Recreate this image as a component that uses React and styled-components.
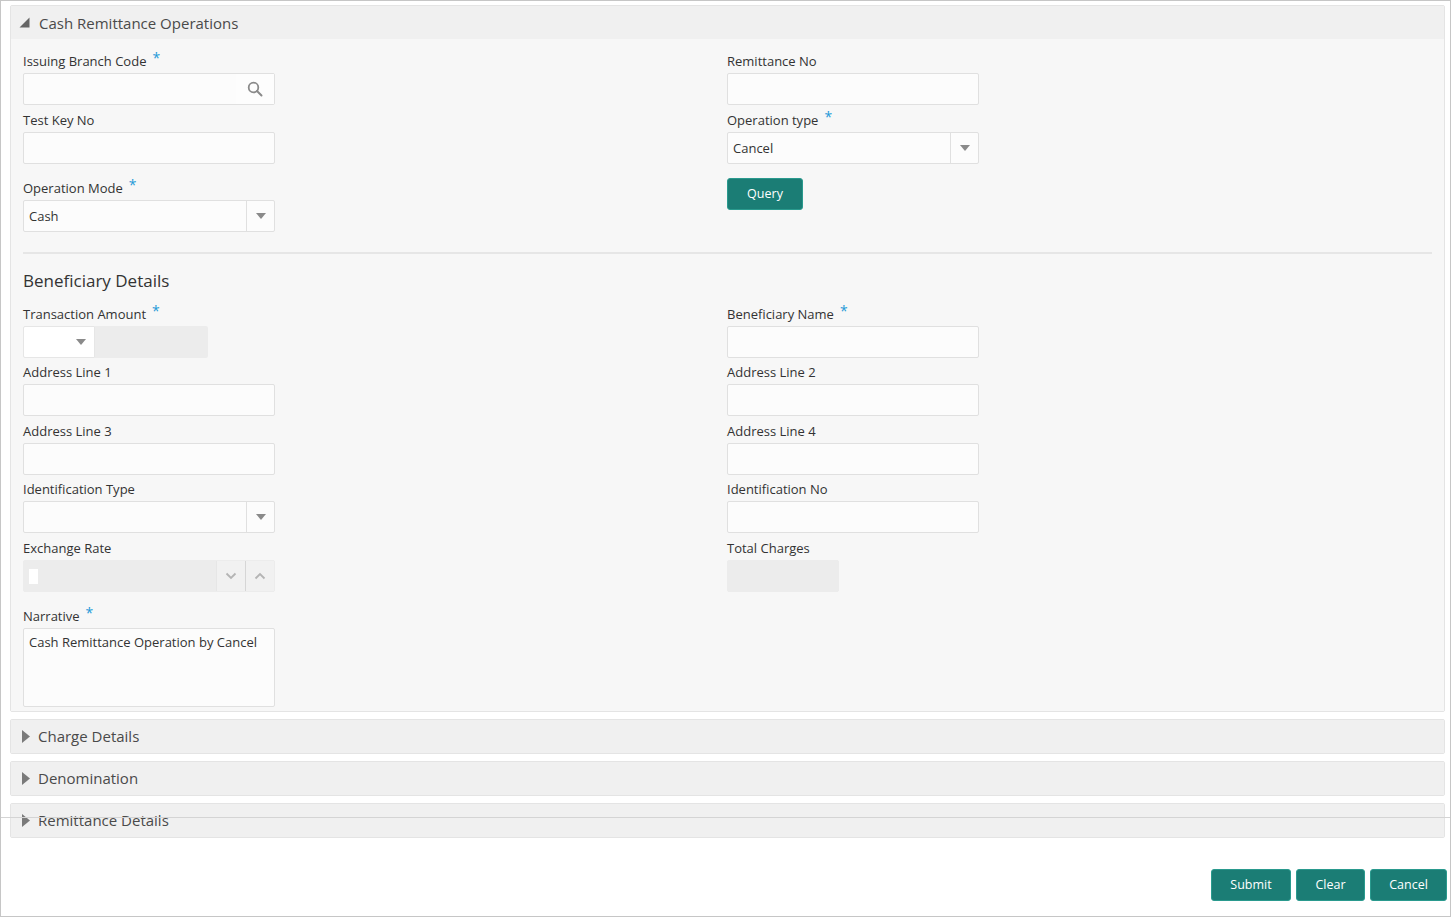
import styled, { createGlobalStyle } from 'styled-components'

const GlobalStyle = createGlobalStyle`
  html, body {
    margin: 0;
    padding: 0;
    background: #ffffff;
  }
  body {
    font-family: "Open Sans", "Noto Sans", "Liberation Sans", sans-serif;
    color: #333333;
  }
`

const Frame = styled.div`
  position: relative;
  box-sizing: border-box;
  width: 1451px;
  height: 917px;
  border: 1px solid #c6c6c6;
  padding: 4px 5px 0 9px;
  display: flex;
  flex-direction: column;
  gap: 7px;
  overflow: hidden;
`

const Panel = styled.section`
  box-sizing: border-box;
  border: 1px solid #e4e4e4;
  border-radius: 2px;
  background: #f0f0f0;
`

const PanelHeader = styled.div`
  display: flex;
  align-items: center;
  gap: ${p => (p.$open ? '9px' : '8px')};
  height: 33px;
  padding-left: ${p => (p.$open ? '8px' : '11px')};
  font-size: 15px;
  color: #4a4a4a;
  background: #f0f0f0;
`

const PanelBody = styled.div`
  background: #f7f7f7;
  padding: 12px 12px 4px 12px;
`

const TwoCols = styled.div`
  display: grid;
  grid-template-columns: 704px 1fr;
  row-gap: 4.5px;
`

const Field = styled.div`
  display: flex;
  flex-direction: column;
  margin-top: ${p => p.$push || 0}px;
`

const Label = styled.label`
  box-sizing: border-box;
  display: flex;
  align-items: flex-start;
  height: 21px;
  padding-top: 1px;
  margin-bottom: 1px;
  font-size: 13px;
  line-height: 18px;
  color: #333333;
`

const Star = styled.span`
  color: #1f9ad8;
  font-size: 14px;
  line-height: 12px;
  margin-left: 6px;
`

const InputBox = styled.div`
  box-sizing: border-box;
  position: relative;
  display: flex;
  align-items: center;
  width: ${p => p.$w || 252}px;
  height: ${p => p.$h || 32}px;
  border: 1px solid ${p => (p.$disabled ? '#ececec' : '#e0e0e0')};
  border-radius: 2px;
  background: ${p => (p.$disabled ? '#ececec' : '#fcfcfc')};
  font-size: 13px;
  color: #333333;
`

const Value = styled.span`
  flex: 1;
  padding-left: 5px;
`

const TextArea = styled.div`
  box-sizing: border-box;
  width: 252px;
  height: 79px;
  border: 1px solid #e0e0e0;
  border-radius: 2px;
  background: #fcfcfc;
  padding: 4px 5px;
  font-size: 13px;
  line-height: 18px;
  color: #333333;
`

const SelectButton = styled.span`
  box-sizing: border-box;
  display: flex;
  align-items: center;
  justify-content: center;
  width: 28px;
  height: 100%;
  border-left: 1px solid ${p => (p.$line ? '#e0e0e0' : 'transparent')};
`

const SearchButton = styled.span`
  display: flex;
  align-items: center;
  justify-content: center;
  width: 38px;
  height: 100%;
  background: #fdfdfd;
`

const Caret = styled.span`
  width: 0;
  height: 0;
  border-left: 5px solid transparent;
  border-right: 5px solid transparent;
  border-top: 6px solid #8a8a8a;
`

const AmountRow = styled.div`
  display: flex;
  height: 32px;
`

const AmountCurrency = styled.div`
  box-sizing: border-box;
  display: flex;
  justify-content: flex-end;
  width: 72px;
  height: 32px;
  border: 1px solid #e6e6e6;
  border-radius: 2px 0 0 2px;
  background: #ffffff;
`

const AmountValue = styled.div`
  width: 113px;
  height: 32px;
  background: #ececec;
  border-radius: 0 2px 2px 0;
`

const SpinButton = styled.span`
  box-sizing: border-box;
  display: flex;
  align-items: center;
  justify-content: center;
  width: 29px;
  height: 100%;
  border-left: 1px solid ${p => (p.$strong ? '#d6d6d6' : '#e6e6e6')};
  background: #f1f1f1;
`

const Cursor = styled.span`
  position: absolute;
  left: 5px;
  top: 8px;
  width: 9px;
  height: 15px;
  background: #ffffff;
`

const QueryButton = styled.button`
  box-sizing: border-box;
  width: 76px;
  height: 32px;
  border: 1px solid #2a9a8e;
  border-radius: 3px;
  background: #1b7d75;
  color: #ffffff;
  font-family: inherit;
  font-size: 12.5px;
  padding: 0;
  margin-top: 9.5px;
`

const Separator = styled.hr`
  border: none;
  border-top: 2px solid #e6e6e6;
  margin: 20px 0 0 0;
`

const SectionTitle = styled.h2`
  margin: 15px 0 11px 0;
  font-size: 17px;
  font-weight: 400;
  line-height: 24px;
  color: #333333;
`

const Footer = styled.div`
  display: flex;
  justify-content: flex-end;
  gap: 5px;
  margin-top: 24px;
  margin-right: -2px;
`

const ActionButton = styled.button`
  box-sizing: border-box;
  width: ${p => p.$w}px;
  height: 32px;
  border: 1px solid #2a9a8e;
  border-radius: 3px;
  background: #1b7d75;
  color: #ffffff;
  font-family: inherit;
  font-size: 12.5px;
  padding: 0;
`

const StrayLine = styled.div`
  position: absolute;
  left: 0;
  right: 0;
  top: 816px;
  height: 1px;
  background: #d4d4d4;
`

function Required() {
  return <Star>*</Star>
}

function SearchIcon() {
  return (
    <svg width="16" height="16" viewBox="0 0 16 16">
      <circle cx="6.5" cy="6.5" r="4.8" fill="none" stroke="#8a8a8a" strokeWidth="1.8" />
      <line x1="10" y1="10" x2="14.5" y2="14.5" stroke="#8a8a8a" strokeWidth="2" strokeLinecap="round" />
    </svg>
  )
}

function Chevron({ up }) {
  return (
    <svg width="12" height="8" viewBox="0 0 12 8">
      <polyline
        points={up ? '1.5,6.5 6,2 10.5,6.5' : '1.5,1.5 6,6 10.5,1.5'}
        fill="none"
        stroke="#b4b4b4"
        strokeWidth="1.8"
      />
    </svg>
  )
}

function OpenArrow() {
  return (
    <svg width="11" height="11" viewBox="0 0 11 11">
      <polygon points="10.5,0.5 10.5,10.5 0.5,10.5" fill="#666666" />
    </svg>
  )
}

function ClosedArrow() {
  return (
    <svg width="8" height="13" viewBox="0 0 8 13">
      <polygon points="0,0 8,6.5 0,13" fill="#7a7a7a" />
    </svg>
  )
}

function TextField({ label, required, push }) {
  return (
    <Field $push={push}>
      <Label>{label}{required && <Required />}</Label>
      <InputBox />
    </Field>
  )
}

function SelectField({ label, required, value, push }) {
  return (
    <Field $push={push}>
      <Label>{label}{required && <Required />}</Label>
      <InputBox>
        <Value>{value}</Value>
        <SelectButton $line><Caret /></SelectButton>
      </InputBox>
    </Field>
  )
}

function CollapsedPanel({ title }) {
  return (
    <Panel>
      <PanelHeader>
        <ClosedArrow />
        {title}
      </PanelHeader>
    </Panel>
  )
}

export default function App() {
  return (
    <>
      <GlobalStyle />
      <Frame>
        <Panel>
          <PanelHeader $open>
            <OpenArrow />
            Cash Remittance Operations
          </PanelHeader>
          <PanelBody>
            <TwoCols>
              <Field>
                <Label>Issuing Branch Code<Required /></Label>
                <InputBox>
                  <Value />
                  <SearchButton><SearchIcon /></SearchButton>
                </InputBox>
              </Field>
              <TextField label="Remittance No" />
              <TextField label="Test Key No" />
              <SelectField label="Operation type" required value="Cancel" />
              <SelectField label="Operation Mode" required value="Cash" push={9.5} />
              <Field>
                <QueryButton>Query</QueryButton>
              </Field>
            </TwoCols>

            <Separator />
            <SectionTitle>Beneficiary Details</SectionTitle>

            <TwoCols>
              <Field>
                <Label>Transaction Amount<Required /></Label>
                <AmountRow>
                  <AmountCurrency>
                    <SelectButton><Caret /></SelectButton>
                  </AmountCurrency>
                  <AmountValue />
                </AmountRow>
              </Field>
              <TextField label="Beneficiary Name" required />
              <TextField label="Address Line 1" />
              <TextField label="Address Line 2" />
              <TextField label="Address Line 3" />
              <TextField label="Address Line 4" />
              <SelectField label="Identification Type" />
              <TextField label="Identification No" />
              <Field>
                <Label>Exchange Rate</Label>
                <InputBox $disabled>
                  <Cursor />
                  <Value />
                  <SpinButton><Chevron /></SpinButton>
                  <SpinButton $strong><Chevron up /></SpinButton>
                </InputBox>
              </Field>
              <Field>
                <Label>Total Charges</Label>
                <InputBox $disabled $w={112} />
              </Field>
              <Field $push={9.5}>
                <Label>Narrative<Required /></Label>
                <TextArea>Cash Remittance Operation by Cancel</TextArea>
              </Field>
            </TwoCols>
          </PanelBody>
        </Panel>

        <CollapsedPanel title="Charge Details" />
        <CollapsedPanel title="Denomination" />
        <CollapsedPanel title="Remittance Details" />

        <Footer>
          <ActionButton $w={80}>Submit</ActionButton>
          <ActionButton $w={69}>Clear</ActionButton>
          <ActionButton $w={77}>Cancel</ActionButton>
        </Footer>
        <StrayLine />
      </Frame>
    </>
  )
}
